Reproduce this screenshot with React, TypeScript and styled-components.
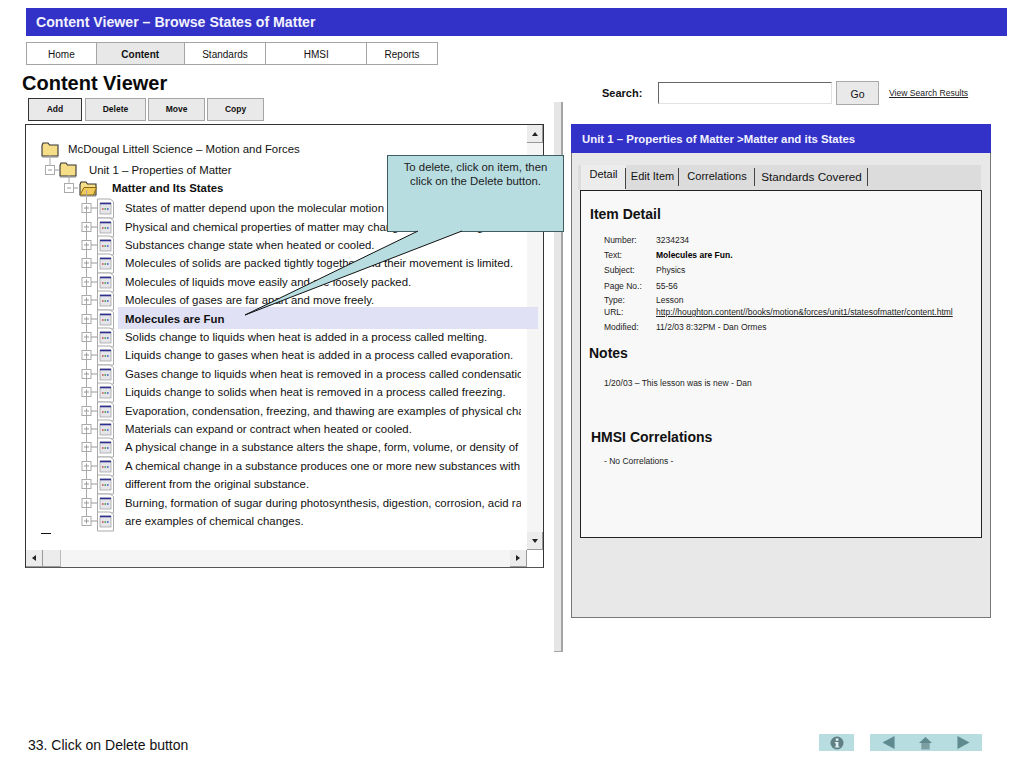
import React from "react";
import styled, { createGlobalStyle } from "styled-components";

const Global = createGlobalStyle`
  html, body { margin: 0; padding: 0; background: #fff; }
  body { font-family: "Liberation Sans", Arial, sans-serif; color: #111; }
`;

const Page = styled.div`
  position: relative;
  width: 1024px;
  height: 768px;
  overflow: hidden;
  padding: 8px 0 0 22px;
  box-sizing: border-box;
`;
const Banner = styled.header`
  margin-left: 4px;
  width: 981px;
  height: 28px;
  box-sizing: border-box;
  padding-left: 10px;
  background: #3232c8;
  color: #f2f2ff;
  font-size: 14.15px;
  font-weight: 700;
  line-height: 28px;
`;
const Nav = styled.nav`
  display: flex;
  margin: 6px 0 0 4px;
  height: 23px;
  width: 412px;
  box-sizing: border-box;
  border: 1px solid #a5a5a5;
`;
const NavItem = styled.div<{ $w: number; $active?: boolean }>`
  width: ${(p) => p.$w}px;
  border-right: 1px solid #a5a5a5;
  box-sizing: border-box;
  text-align: center;
  font-size: 10px;
  line-height: 23px;
  font-weight: ${(p) => (p.$active ? 700 : 400)};
  background: ${(p) => (p.$active ? "#e8e8e8" : "#fff")};
  &:last-child { border-right: 0; }
`;
const Main = styled.main`
  display: flex;
  height: 662px;
  margin-top: 7px;
`;
const LeftCol = styled.section`
  width: 522px;
  flex: none;
`;
const Title = styled.h1`
  margin: 0;
  font-size: 20px;
  line-height: 22px;
  font-weight: 700;
  color: #0a0a0a;
`;
const Toolbar = styled.div`
  display: flex;
  margin: 4px 0 0 6px;
  height: 23px;
`;
const ToolButton = styled.div<{ $w: number; $gap: number; $primary?: boolean }>`
  width: ${(p) => p.$w}px;
  margin-right: ${(p) => p.$gap}px;
  box-sizing: border-box;
  background: #e9e9e9;
  border: 1px solid ${(p) => (p.$primary ? "#333" : "#a5a5a5")};
  text-align: center;
  font-size: 8.5px;
  font-weight: 700;
  line-height: 21px;
`;
const TreeBox = styled.div`
  margin: 3px 0 0 3px;
  width: 519px;
  height: 444px;
  box-sizing: border-box;
  border: 1px solid #333;
  border-bottom-color: #555;
  display: grid;
  grid-template-columns: 1fr 16px;
  grid-template-rows: 1fr 17px;
  background: #fff;
`;
const Tree = styled.div`
  position: relative;
  z-index: 1;
  padding: 14px 0 0 15px;
  min-width: 0;
`;
const TreeRow = styled.div<{ $indent: number; $h: number }>`
  display: flex;
  align-items: center;
  height: ${(p) => p.$h}px;
  margin-left: ${(p) => p.$indent}px;
`;
const RowIcon = styled.svg`
  flex: none;
  overflow: visible;
`;
const BranchLabel = styled.span<{ $gap: number; $bold?: boolean }>`
  margin-left: ${(p) => p.$gap}px;
  font-size: 11.4px;
  font-weight: ${(p) => (p.$bold ? 700 : 400)};
  white-space: nowrap;
`;
const LeafList = styled.div`
  margin: 3px 0 0 40px;
`;
const LeafRow = styled.div<{ $selected?: boolean }>`
  position: relative;
  display: flex;
  align-items: center;
  height: 18.41px;
  &::before {
    content: "";
    display: ${(p) => (p.$selected ? "block" : "none")};
    position: absolute;
    left: 37px;
    top: -2px;
    width: 420px;
    height: 22px;
    background: #e1e1f5;
  }
`;
const LeafText = styled.span<{ $bold?: boolean }>`
  position: relative;
  width: 396px;
  margin-left: 11px;
  overflow: hidden;
  white-space: nowrap;
  font-size: 11.4px;
  font-weight: ${(p) => (p.$bold ? 700 : 400)};
`;
const Dash = styled.div`
  width: 10px;
  height: 1px;
  margin-top: 3px;
  background: #111;
`;
const VScroll = styled.div`
  display: flex;
  flex-direction: column;
  background: #f5f5f5;
`;
const HScroll = styled.div`
  display: flex;
  background: #f5f5f5;
`;
const ScrollSpacer = styled.div`
  flex: 1;
`;
const Corner = styled.div`
  background: #fff;
`;
const Arrow = styled.div<{ $w: number; $h: number }>`
  flex: none;
  width: ${(p) => p.$w}px;
  height: ${(p) => p.$h}px;
  box-sizing: border-box;
  background: #ececec;
  border-right: 1px solid #999;
  border-bottom: 1px solid #999;
  display: flex;
  align-items: center;
  justify-content: center;
`;
const Thumb = styled.div`
  flex: none;
  width: 18px;
  background: #ececec;
  border-bottom: 1px solid #999;
  border-right: 1px solid #bbb;
  box-sizing: border-box;
`;
const Divider = styled.div`
  flex: none;
  width: 9px;
  height: 550px;
  margin: 30px 0 0 10px;
  box-sizing: border-box;
  background: #e6e6e6;
  border-right: 2px solid #a5a5a5;
  border-bottom: 1px solid #a5a5a5;
`;
const RightCol = styled.section`
  margin-left: 8px;
  width: 420px;
  flex: none;
`;
const SearchBar = styled.div`
  display: flex;
  align-items: center;
  height: 24px;
  margin-top: 9px;
  padding-left: 31px;
`;
const SearchLabel = styled.span`
  width: 56px;
  font-size: 11px;
  font-weight: 700;
  flex: none;
`;
const SearchInput = styled.div`
  width: 174px;
  height: 22px;
  box-sizing: border-box;
  border: 1px solid #e2e2e2;
  border-top: 1px solid #666;
  border-left: 1px solid #666;
  background: #fff;
  flex: none;
`;
const GoButton = styled.div`
  width: 43px;
  height: 24px;
  margin-left: 4px;
  box-sizing: border-box;
  border: 1px solid #aaa;
  background: #e9e9e9;
  text-align: center;
  font-size: 10.5px;
  line-height: 24px;
  flex: none;
`;
const ResultsLink = styled.a`
  margin-left: 10px;
  font-size: 8.6px;
  color: #222;
  text-decoration: underline;
`;
const Panel = styled.div`
  margin-top: 19px;
  height: 494px;
  box-sizing: border-box;
  background: #e8e8e8;
  border: 1px solid #777;
  border-top: 0;
`;
const PanelHead = styled.div`
  height: 29px;
  padding-left: 11px;
  background: #3232c8;
  color: #f2f2ff;
  font-size: 11.4px;
  font-weight: 700;
  line-height: 30px;
  margin: 0 -1px;
`;
const TabBand = styled.div`
  display: flex;
  height: 25px;
  margin: 12px 9px 0 6px;
  background: #dcdcdc;
  padding-left: 3px;
`;
const Tab = styled.div<{ $w: number; $size: number; $active?: boolean }>`
  width: ${(p) => p.$w}px;
  box-sizing: border-box;
  font-size: ${(p) => p.$size}px;
  text-align: center;
  line-height: ${(p) => (p.$active ? "18px" : "23px")};
  background: ${(p) => (p.$active ? "#ececec" : "transparent")};
  position: relative;
  &::after {
    content: "";
    position: absolute;
    right: 0;
    top: 3px;
    height: ${(p) => (p.$active ? "21px" : "18px")};
    width: 1px;
    background: #444;
  }
`;
const DetailBox = styled.div`
  margin-left: 8px;
  width: 402px;
  height: 348px;
  box-sizing: border-box;
  border: 1.5px solid #222;
  background: #f8f8f8;
  padding-top: 15px;
`;
const SectionTitle = styled.h2<{ $x: number; $top: number }>`
  margin: ${(p) => p.$top}px 0 0 ${(p) => p.$x}px;
  font-size: 14px;
  line-height: 16px;
  font-weight: 700;
  color: #111;
`;
const Fields = styled.div`
  margin: 10px 0 0 23px;
`;
const Field = styled.div<{ $h: number }>`
  display: flex;
  height: ${(p) => p.$h}px;
  align-items: center;
  font-size: 8.5px;
  color: #222;
`;
const FieldLabel = styled.span`
  width: 52px;
  flex: none;
`;
const FieldValue = styled.span<{ $bold?: boolean; $link?: boolean }>`
  font-weight: ${(p) => (p.$bold ? 700 : 400)};
  text-decoration: ${(p) => (p.$link ? "underline" : "none")};
  color: ${(p) => (p.$bold ? "#000" : "#222")};
  white-space: nowrap;
`;
const Note = styled.p<{ $top: number }>`
  margin: ${(p) => p.$top}px 0 0 23px;
  font-size: 8.5px;
  line-height: 10px;
  color: #222;
`;
const Footer = styled.footer`
  display: flex;
  align-items: flex-start;
  height: 22px;
`;
const Caption = styled.div`
  margin: 3px 0 0 6px;
  width: 791px;
  flex: none;
  font-size: 14px;
  line-height: 16px;
  color: #111;
`;
const InfoChip = styled.div`
  width: 35px;
  height: 17px;
  background: #b7dde1;
  display: flex;
  align-items: center;
  justify-content: center;
  flex: none;
`;
const NavChip = styled.div`
  margin-left: 16px;
  width: 112px;
  height: 17px;
  background: #b7dde1;
  display: grid;
  grid-template-columns: repeat(3, 1fr);
  justify-items: center;
  align-items: center;
  flex: none;
`;
const Callout = styled.div`
  position: absolute;
  left: 387px;
  top: 155px;
  width: 177px;
  height: 77px;
  box-sizing: border-box;
  background: #b7dde1;
  border: 1px solid #3f5c60;
  border-right-width: 1.5px;
  border-bottom-width: 1.5px;
  padding: 5px 4px 0;
  text-align: center;
  font-size: 11.4px;
  line-height: 13.5px;
  color: #222;
`;
const CalloutTail = styled.svg`
  position: absolute;
  z-index: 2;
  left: 240px;
  top: 225px;
  width: 240px;
  height: 100px;
`;
const CalloutLayer = styled.div`
  position: absolute;
  z-index: 2;
  inset: 0;
  pointer-events: none;
`;

const Folder = ({ open, w = 18, h = 17 }: { open?: boolean; w?: number; h?: number }) => (
  <RowIcon width={w} height={h} viewBox="0 0 18 17">
    <path d="M1 4.5 L2 2 H7 L8.5 4 H17 V15 H1 Z" fill="#f6dd88" stroke="#333" strokeWidth="1.1" />
    {open ? <path d="M1 15 L5 7.5 H17.5 L14.5 15 Z" fill="#f2c95a" stroke="#8a6a10" strokeWidth="1" /> : null}
    <path d="M1 16 H17" stroke="#888" strokeWidth="1" />
  </RowIcon>
);

const Minus = ({ stem = 8 }: { stem?: number }) => (
  <RowIcon width={14} height={14} viewBox="0 0 14 14">
    <path d={`M5 -${stem} V2`} stroke="#aaa" fill="none" />
    <rect x="0.5" y="2.5" width="9" height="9" fill="#fff" stroke="#aaa" />
    <path d="M3 7 H7 M10 7 H14" stroke="#999" />
  </RowIcon>
);

const LeafIcon = ({ last }: { last?: boolean }) => (
  <RowIcon width={33} height={20} viewBox="0 0 33 20">
    {last ? (
      <path d="M5.5 -8 V5" stroke="#aaa" fill="none" />
    ) : (
      <path d="M5.5 -8 V28" stroke="#aaa" fill="none" />
    )}
    <rect x="1" y="5.5" width="9" height="9" fill="#fff" stroke="#aaa" />
    <path d="M3 10 H8 M5.5 7.5 V12.5 M10 10 H16" stroke="#999" />
    <path d="M16.5 1 H29 L32.5 3.5 V20 H16.5 Z" fill="#fff" stroke="#aaa" />
    <rect x="19" y="5" width="11" height="11" fill="#e6e6ea" stroke="#999" strokeWidth="0.7" />
    <path d="M19 5.5 H30" stroke="#303090" strokeWidth="1.6" />
    <path d="M21 11 h1.6" stroke="#c84a4a" strokeWidth="1.6" />
    <path d="M23.5 11 h1.6" stroke="#3a9a4a" strokeWidth="1.6" />
    <path d="M26 11 h1.6" stroke="#3a5ac8" strokeWidth="1.6" />
  </RowIcon>
);

const ArrowIcon = ({ dir }: { dir: "up" | "down" | "left" | "right" }) => {
  const d = {
    up: "M3 1 L6 5 H0 Z",
    down: "M0 1 H6 L3 5 Z",
    left: "M5 0 V6 L1 3 Z",
    right: "M1 0 V6 L5 3 Z",
  }[dir];
  return (
    <svg width="6" height="6" viewBox="0 0 6 6">
      <path d={d} fill="#222" />
    </svg>
  );
};

const leaves = [
  "States of matter depend upon the molecular motion of particles.",
  "Physical and chemical properties of matter may change during a change of state.",
  "Substances change state when heated or cooled.",
  "Molecules of solids are packed tightly together and their movement is limited.",
  "Molecules of liquids move easily and are loosely packed.",
  "Molecules of gases are far apart and move freely.",
  "Molecules are Fun",
  "Solids change to liquids when heat is added in a process called melting.",
  "Liquids change to gases when heat is added in a process called evaporation.",
  "Gases change to liquids when heat is removed in a process called condensation.",
  "Liquids change to solids when heat is removed in a process called freezing.",
  "Evaporation, condensation, freezing, and thawing are examples of physical changes.",
  "Materials can expand or contract when heated or cooled.",
  "A physical change in a substance alters the shape, form, volume, or density of a substance.",
  "A chemical change in a substance produces one or more new substances with properties",
  "different from the original substance.",
  "Burning, formation of sugar during photosynthesis, digestion, corrosion, acid rain",
  "are examples of chemical changes.",
];

const fields: { label: string; value: string; h: number; bold?: boolean; link?: boolean }[] = [
  { label: "Number:", value: "3234234", h: 15.3 },
  { label: "Text:", value: "Molecules are Fun.", h: 15.3, bold: true },
  { label: "Subject:", value: "Physics", h: 15.3 },
  { label: "Page No.:", value: "55-56", h: 15.3 },
  { label: "Type:", value: "Lesson", h: 14.3 },
  { label: "URL:", value: "http://houghton.content//books/motion&forces/unit1/statesofmatter/content.html", h: 9, link: true },
  { label: "Modified:", value: "11/2/03 8:32PM - Dan Ormes", h: 22 },
];

export default function App() {
  return (
    <Page>
      <Global />
      <Banner>Content Viewer – Browse States of Matter</Banner>
      <Nav>
        <NavItem $w={70}>Home</NavItem>
        <NavItem $w={88} $active>Content</NavItem>
        <NavItem $w={82}>Standards</NavItem>
        <NavItem $w={101}>HMSI</NavItem>
        <NavItem $w={70}>Reports</NavItem>
      </Nav>
      <Main>
        <LeftCol>
          <Title>Content Viewer</Title>
          <Toolbar>
            <ToolButton $w={54} $gap={3} $primary>Add</ToolButton>
            <ToolButton $w={61} $gap={2}>Delete</ToolButton>
            <ToolButton $w={57} $gap={2}>Move</ToolButton>
            <ToolButton $w={57} $gap={0}>Copy</ToolButton>
          </Toolbar>
          <TreeBox>
            <Tree>
              <TreeRow $indent={0} $h={20}>
                <Folder />
                <BranchLabel $gap={9}>McDougal Littell Science – Motion and Forces</BranchLabel>
              </TreeRow>
              <TreeRow $indent={4} $h={21}>
                <Minus />
                <Folder />
                <BranchLabel $gap={12}>Unit 1 – Properties of Matter</BranchLabel>
              </TreeRow>
              <TreeRow $indent={23} $h={16}>
                <Minus stem={6} />
                <Folder open w={20} />
                <BranchLabel $gap={14} $bold>Matter and Its States</BranchLabel>
              </TreeRow>
              <LeafList>
                {leaves.map((text, i) => (
                  <LeafRow key={text} $selected={i === 6}>
                    <LeafIcon last={i === leaves.length - 1} />
                    <LeafText $bold={i === 6}>{text}</LeafText>
                  </LeafRow>
                ))}
              </LeafList>
              <Dash />
            </Tree>
            <VScroll>
              <Arrow $w={16} $h={18}><ArrowIcon dir="up" /></Arrow>
              <ScrollSpacer />
              <Arrow $w={16} $h={18}><ArrowIcon dir="down" /></Arrow>
            </VScroll>
            <HScroll>
              <Arrow $w={17} $h={17}><ArrowIcon dir="left" /></Arrow>
              <Thumb />
              <ScrollSpacer />
              <Arrow $w={17} $h={17}><ArrowIcon dir="right" /></Arrow>
            </HScroll>
            <Corner />
          </TreeBox>
        </LeftCol>
        <Divider />
        <RightCol>
          <SearchBar>
            <SearchLabel>Search:</SearchLabel>
            <SearchInput />
            <GoButton>Go</GoButton>
            <ResultsLink>View Search Results</ResultsLink>
          </SearchBar>
          <Panel>
            <PanelHead>Unit 1 – Properties of Matter &gt;Matter and its States</PanelHead>
            <TabBand>
              <Tab $w={45} $size={11} $active>Detail</Tab>
              <Tab $w={53} $size={11}>Edit Item</Tab>
              <Tab $w={76} $size={11}>Correlations</Tab>
              <Tab $w={113} $size={11.7}>Standards Covered</Tab>
            </TabBand>
            <DetailBox>
              <SectionTitle $x={9} $top={0}>Item Detail</SectionTitle>
              <Fields>
                {fields.map((f) => (
                  <Field key={f.label} $h={f.h}>
                    <FieldLabel>{f.label}</FieldLabel>
                    <FieldValue $bold={f.bold} $link={f.link}>{f.value}</FieldValue>
                  </Field>
                ))}
              </Fields>
              <SectionTitle $x={8} $top={7}>Notes</SectionTitle>
              <Note $top={17}>1/20/03 – This lesson was is new - Dan</Note>
              <SectionTitle $x={10} $top={41}>HMSI Correlations</SectionTitle>
              <Note $top={11}>- No Correlations -</Note>
            </DetailBox>
          </Panel>
        </RightCol>
      </Main>
      <Footer>
        <Caption>33. Click on Delete button</Caption>
        <InfoChip>
          <svg width="14" height="14" viewBox="0 0 14 14">
            <circle cx="7" cy="7" r="6.5" fill="#5f7f84" />
            <rect x="5.8" y="2.4" width="2.6" height="2.4" fill="#dff0f2" />
            <path d="M4.8 6 H8.4 V10.4 H9.4 V11.6 H4.8 V10.4 H5.8 V7.2 H4.8 Z" fill="#dff0f2" />
          </svg>
        </InfoChip>
        <NavChip>
          <svg width="13" height="13" viewBox="0 0 14 15">
            <path d="M14 0 V15 L0 7.5 Z" fill="#5f8a90" />
          </svg>
          <svg width="13" height="14" viewBox="0 0 14 14">
            <path d="M7 0.5 L14 7 H0 Z" fill="#5f8a90" />
            <rect x="2.5" y="7" width="9" height="7" fill="#7d9ea3" />
          </svg>
          <svg width="13" height="13" viewBox="0 0 14 15">
            <path d="M0 0 V15 L14 7.5 Z" fill="#5f8a90" />
          </svg>
        </NavChip>
      </Footer>
      <CalloutLayer>
        <CalloutTail viewBox="0 0 240 100">
          <path d="M178 6 L5 90 L222 6" fill="#b7dde1" stroke="#111" strokeWidth="1" strokeLinejoin="miter" />
        </CalloutTail>
        <Callout>To delete, click on item, then click on the Delete button.</Callout>
      </CalloutLayer>
    </Page>
  );
}
